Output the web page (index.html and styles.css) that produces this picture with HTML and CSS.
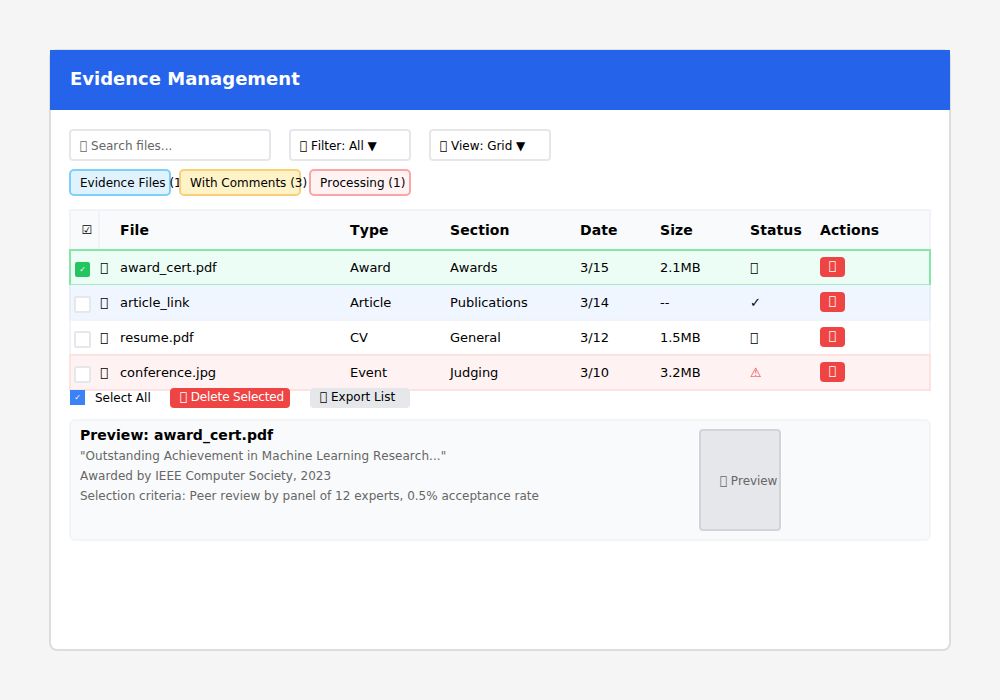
FILE: index.html
```html
<!DOCTYPE html>
<html lang="en">
<head>
  <meta charset="UTF-8" />
  <title>Evidence Management</title>
  <link rel="stylesheet" href="styles.css">
</head>
<body>
  <div class="card">
    <div class="header">Evidence Management</div>
    <div class="content">
      <div class="toolbar">
        <div class="field field-search">&#xE000; Search files...</div>
        <div class="field field-select">&#xE000; Filter: All ▼</div>
        <div class="field field-select">&#xE000; View: Grid ▼</div>
      </div>

      <div class="tags">
        <div class="tag tag-blue">Evidence Files (12)</div>
        <div class="tag tag-amber">With Comments (3)</div>
        <div class="tag tag-red">Processing (1)</div>
      </div>

      <div class="table">
        <div class="row row-head">
          <div class="head-check">☑</div>
          <div></div>
          <div>File</div>
          <div>Type</div>
          <div>Section</div>
          <div>Date</div>
          <div>Size</div>
          <div>Status</div>
          <div>Actions</div>
        </div>
        <div class="row row-selected">
          <div><span class="check check-on">✓</span></div>
          <div>&#xE000;</div>
          <div>award_cert.pdf</div>
          <div>Award</div>
          <div>Awards</div>
          <div>3/15</div>
          <div>2.1MB</div>
          <div>&#xE000;</div>
          <div><span class="btn-remove">&#xE000;</span></div>
        </div>
        <div class="row row-info">
          <div><span class="check"></span></div>
          <div>&#xE000;</div>
          <div>article_link</div>
          <div>Article</div>
          <div>Publications</div>
          <div>3/14</div>
          <div>--</div>
          <div>✓</div>
          <div><span class="btn-remove">&#xE000;</span></div>
        </div>
        <div class="row">
          <div><span class="check"></span></div>
          <div>&#xE000;</div>
          <div>resume.pdf</div>
          <div>CV</div>
          <div>General</div>
          <div>3/12</div>
          <div>1.5MB</div>
          <div>&#xE000;</div>
          <div><span class="btn-remove">&#xE000;</span></div>
        </div>
        <div class="row row-error">
          <div><span class="check"></span></div>
          <div>&#xE000;</div>
          <div>conference.jpg</div>
          <div>Event</div>
          <div>Judging</div>
          <div>3/10</div>
          <div>3.2MB</div>
          <div class="status-warn">⚠</div>
          <div><span class="btn-remove">&#xE000;</span></div>
        </div>
      </div>

      <div class="bulk">
        <span class="check-all">✓</span>
        <span class="bulk-label">Select All</span>
        <div class="btn btn-delete">&#xE000; Delete Selected</div>
        <div class="btn btn-export">&#xE000; Export List</div>
      </div>

      <div class="preview">
        <div class="preview-text">
          <h3>Preview: award_cert.pdf</h3>
          <p class="quote">"Outstanding Achievement in Machine Learning Research..."</p>
          <p>Awarded by IEEE Computer Society, 2023</p>
          <p>Selection criteria: Peer review by panel of 12 experts, 0.5% acceptance rate</p>
        </div>
        <div class="thumb">&#xE000; Preview</div>
      </div>
    </div>
  </div>
</body>
</html>
```

FILE: styles.css
```css
* { box-sizing: border-box; }
html, body {
  margin: 0; padding: 0;
  background: #f5f5f5;
  font-family: 'DejaVu Sans', sans-serif;
  font-kerning: none;
  color: #000;
}
body { padding: 49px; }
.card {
  width: 902px; height: 602px;
  background: #fff;
  border: 2px solid #ddd;
  border-radius: 8px;
}
.header {
  height: 60px;
  margin: -1px -1px 0;
  padding-left: 20px;
  background: #2563eb;
  color: #fff;
  font-size: 18px; font-weight: bold;
  line-height: 58px;
}
.content { padding: 19px 18px 0; }

.toolbar { display: flex; gap: 18px; height: 32px; margin-bottom: 8px; }
.field {
  height: 32px; padding: 0 9px;
  background: #fff;
  border: 2px solid #e5e7eb;
  border-radius: 4px;
  font-size: 12px; line-height: 31px;
}
.field-search { width: 202px; color: #666; }
.field-select { width: 122px; letter-spacing: -0.05px; }

.tags { display: flex; gap: 8px; height: 27px; margin-bottom: 13px; }
.tag {
  height: 27px; padding: 0 9px;
  border: 2px solid;
  border-radius: 5px;
  font-size: 12px; line-height: 24px;
  white-space: nowrap;
}
.tag-blue { width: 102px; background: #e0f2fe; border-color: #7dd0fa; }
.tag-amber { width: 122px; background: #fef3c7; border-color: #fbcf7a; }
.tag-red { width: 102px; background: #fef2f2; border-color: #fca5a5; }

.table { height: 181px; }
.row {
  display: grid;
  grid-template-columns: 29px 20px 230px 100px 130px 80px 90px 70px 1fr;
  align-items: center;
  height: 37px;
  margin-top: -2px;
  border: 2px solid #f1f3f8;
  font-size: 13px;
  letter-spacing: -0.06px;
}
.row-head {
  height: 42px;
  margin-top: 0;
  background: #f9fafb;
  font-size: 14px; font-weight: bold;
  letter-spacing: 0.1px;
}
.head-check {
  align-self: stretch;
  padding-left: 5px;
  border-right: 2px solid #f1f3f8;
  font-size: 12px; font-weight: normal;
  line-height: 38px; text-align: center;
}
.row-selected { background: #ecfdf5; border-color: #86e5a8; border-bottom-color: #a7e8c5; }
.row-info {
  height: 36px;
  margin-top: -1px;
  background: #eff6ff;
  border-color: #e8edf6;
  border-top: 0;
}
.row-error { background: #fef2f2; border-color: #fee2e2; }
.status-warn { color: #ef4444; }

.check {
  display: block;
  width: 17px; height: 17px;
  margin: 4px 0 0 3px;
  background: #fff;
  border: 2px solid #e5e7eb;
  border-radius: 2px;
}
.check-on {
  width: 15px; height: 15px;
  margin-left: 4px;
  background: #22c55e;
  border: 0;
  color: #fff;
  font-size: 8px; line-height: 15px; text-align: center;
}
.btn-remove {
  display: block;
  width: 25px; height: 20px;
  margin-bottom: 1px;
  background: #ef4444;
  border-radius: 4px;
  color: #fff;
  font-size: 12px; line-height: 18px; text-align: center;
}

.bulk { display: flex; align-items: flex-start; height: 20px; margin: -2px 0 0 1px; font-size: 12px; }
.check-all {
  width: 15px; height: 15px;
  margin-top: 2px;
  background: #3b82f6;
  color: #fff;
  font-size: 8px; line-height: 15px; text-align: center;
}
.bulk-label { width: 75px; margin-left: 10px; line-height: 20px; }
.btn {
  height: 20px;
  padding-left: 10px;
  border-radius: 4px;
  line-height: 18px;
}
.btn-delete { width: 120px; margin-right: 20px; background: #ef4444; color: #fff; letter-spacing: -0.13px; }
.btn-export { width: 100px; background: #e5e7eb; }

.preview {
  display: flex;
  height: 122px;
  margin-top: 11px;
  padding: 8px 9px;
  background: #f9fafb;
  border: 2px solid #f3f4f6;
  border-radius: 6px;
}
.preview-text { width: 619px; }
.preview-text h3 { margin: 0; font-size: 14px; line-height: 12px; letter-spacing: 0.05px; }
.preview-text p { margin: 0; font-size: 12px; line-height: 20px; color: #666; }
.preview-text h3 + p { margin-top: 5px; }
.preview-text .quote { letter-spacing: 0.04px; }
.thumb {
  width: 82px; height: 102px;
  padding-left: 19px;
  background: #e5e7eb;
  border: 2px solid #d1d5db;
  border-radius: 4px;
  color: #666;
  font-size: 12px; line-height: 101px;
  letter-spacing: -0.1px;
  white-space: nowrap;
}
```
